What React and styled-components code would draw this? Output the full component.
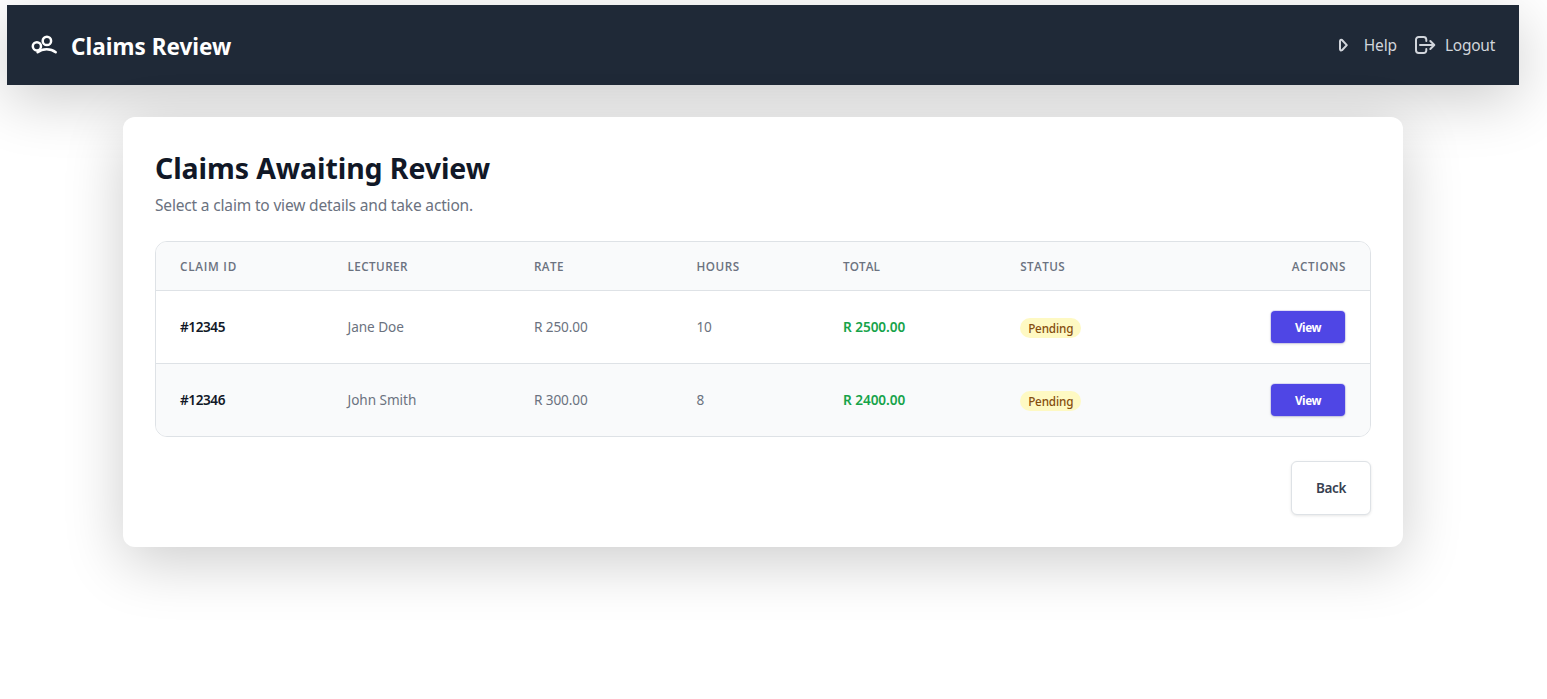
import React from 'react';
import styled, { createGlobalStyle } from 'styled-components';

const GlobalStyle = createGlobalStyle`
  *, *::before, *::after { box-sizing: border-box; }
  body {
    margin: 0;
    background: #fff;
    font-family: 'Noto Sans', 'Open Sans', sans-serif;
    font-size: 16px;
    overflow: hidden;
  }
`;

const Page = styled.div`
  height: 699px;
  padding: 5px 28px 0 7px;
  overflow: hidden;
`;

const Header = styled.header`
  height: 80px;
  padding: 0 24px;
  display: flex;
  align-items: center;
  justify-content: space-between;
  background: #1f2937;
  box-shadow: 0 15px 60px rgba(0, 0, 0, 0.2);
`;

const Brand = styled.div`
  display: flex;
  align-items: center;
  gap: 13px;
  color: #fff;
`;

const Label = styled.span`
  white-space: nowrap;
  font-size: ${(p) => p.$size}px;
  font-weight: ${(p) => p.$weight || 400};
  letter-spacing: ${(p) => p.$track || 0}px;
  line-height: 24px;
  padding-top: ${(p) => p.$drop || 0}px;
`;

const Nav = styled.nav`
  display: flex;
  align-items: center;
  gap: 17px;
  color: #d1d5db;
`;

const NavItem = styled.a`
  display: flex;
  align-items: center;
  gap: ${(p) => p.$gap}px;
`;

const Card = styled.main`
  position: relative;
  width: 1280px;
  height: 430px;
  margin: 32px auto 0;
  padding: 32px;
  border-radius: 12px;
  background: #fff;
  box-shadow: 0 15px 60px rgba(0, 0, 0, 0.2);
`;

const Title = styled.h1`
  margin: 0;
  font-size: 28.5px;
  line-height: 38px;
  font-weight: 700;
  letter-spacing: -0.1px;
  color: #111827;
`;

const Subtitle = styled.p`
  margin: 6px 0 24px;
  font-size: 15.5px;
  line-height: 24px;
  letter-spacing: -0.17px;
  color: #6b7280;
`;

const Table = styled.div`
  border: 1px solid #dee2e6;
  border-radius: 12px;
  overflow: hidden;
`;

const Row = styled.div`
  display: grid;
  grid-template-columns: 167.5px 186.5px 162.5px 146.5px 177.2px 1fr auto;
  align-items: center;
  height: ${(p) => (p.$head ? 49 : p.$last ? 72 : 73)}px;
  padding: ${(p) => (p.$head ? '0 24px 1px' : '0 24px')};
  background: ${(p) => (p.$shade ? '#f9fafb' : '#fff')};
  border-bottom: ${(p) => (p.$last ? 0 : '1px solid #dee2e6')};
`;

const HeadCell = styled.span`
  font-family: 'Open Sans', sans-serif;
  font-size: 11.7px;
  line-height: 16px;
  font-weight: 600;
  letter-spacing: ${(p) => p.$track}px;
  color: #6b7280;
`;

const cellColor = { id: '#111827', plain: '#6b7280', total: '#16a34a' };

const Cell = styled.span`
  font-size: 13.6px;
  line-height: 20px;
  letter-spacing: ${(p) => p.$track}px;
  color: ${(p) => cellColor[p.$kind || 'plain']};
  font-weight: ${(p) => (p.$kind ? 600 : 400)};
`;

const Badge = styled.span`
  justify-self: start;
  display: flex;
  align-items: center;
  justify-content: center;
  width: 61px;
  height: 20px;
  margin-top: 2px;
  border-radius: 10px;
  background: #fef9c3;
  color: #854d0e;
  font-size: 11.7px;
  line-height: 16px;
  font-weight: 500;
  letter-spacing: -0.15px;
`;

const ViewButton = styled.button`
  width: 74px;
  height: 32px;
  padding: 0;
  border: 0;
  margin-right: 1px;
  border-radius: 4px;
  background: #4f46e5;
  color: #fff;
  font: 700 11.7px 'Noto Sans', sans-serif;
  letter-spacing: -0.45px;
  box-shadow: 0 0 0 1px rgba(79, 70, 229, 0.15), 0 1px 3px rgba(0, 0, 0, 0.16);
`;

const Footer = styled.div`
  display: flex;
  justify-content: flex-end;
  margin-top: 24px;
`;

const BackButton = styled.button`
  width: 80px;
  height: 54px;
  padding: 0;
  border: 1px solid #dee2e6;
  border-radius: 6px;
  background: #fff;
  color: #374151;
  font: 600 13.5px 'Noto Sans', sans-serif;
  letter-spacing: -0.35px;
  box-shadow: 0 1px 3px rgba(0, 0, 0, 0.1);
`;

const PeopleIcon = () => (
  <svg width="27" height="24" viewBox="0 0 27 24" fill="none" stroke="#fff" strokeWidth="2.5" strokeLinecap="round" strokeLinejoin="round">
    <circle cx="15.9" cy="7.9" r="4.2" />
    <circle cx="5.9" cy="13.3" r="4.1" />
    <path d="M6.6 19.2C11.5 15.4 19.5 15.2 24.7 19.3" />
  </svg>
);

const HelpIcon = () => (
  <svg width="10" height="14" viewBox="0 0 10 14" fill="none" stroke="currentColor" strokeWidth="2" strokeLinecap="round" strokeLinejoin="round">
    <path d="M1 3.2v7.8q.3 2 2 1.2L7.8 7.1 3 2Q1.3 1.2 1 3.2Z" />
  </svg>
);

const LogoutIcon = () => (
  <svg width="22" height="20" viewBox="0 0 22 20" fill="none" stroke="currentColor" strokeWidth="2" strokeLinecap="round" strokeLinejoin="round">
    <path d="M12.3 6V4.5A2.7 2.7 0 0 0 9.6 2H4.7A2.7 2.7 0 0 0 2 4.7v10.6A2.7 2.7 0 0 0 4.7 18h4.9a2.7 2.7 0 0 0 2.7-2.5V14M6 10h14M16.3 6l4 4-4 4" />
  </svg>
);

const columns = [
  ['CLAIM ID', 0.75],
  ['LECTURER', 0.42],
  ['RATE', 0.4],
  ['HOURS', 0.5],
  ['TOTAL', 0.1],
  ['STATUS', 0.4],
  ['ACTIONS', 0.6],
];

const claims = [
  { id: '#12345', lecturer: 'Jane Doe', rate: 'R 250.00', hours: '10', total: 'R 2500.00' },
  { id: '#12346', lecturer: 'John Smith', rate: 'R 300.00', hours: '8', total: 'R 2400.00' },
];

export default function App() {
  return (
    <>
      <GlobalStyle />
      <Page>
        <Header>
          <Brand>
            <PeopleIcon />
            <Label $size={22.5} $weight={700} $track={0.03} $drop={3}>Claims Review</Label>
          </Brand>
          <Nav>
            <NavItem $gap={15}>
              <HelpIcon />
              <Label $size={15.5} $track={-0.15}>Help</Label>
            </NavItem>
            <NavItem $gap={9}>
              <LogoutIcon />
              <Label $size={15.5} $track={-0.25}>Logout</Label>
            </NavItem>
          </Nav>
        </Header>
        <Card>
          <Title>Claims Awaiting Review</Title>
          <Subtitle>Select a claim to view details and take action.</Subtitle>
          <Table>
            <Row $head $shade>
              {columns.map(([name, track]) => (
                <HeadCell key={name} $track={track}>{name}</HeadCell>
              ))}
            </Row>
            {claims.map((c, i) => (
              <Row key={c.id} $shade={i % 2 === 1} $last={i === claims.length - 1}>
                <Cell $kind="id" $track={-0.45}>{c.id}</Cell>
                <Cell $track={-0.05}>{c.lecturer}</Cell>
                <Cell $track={-0.12}>{c.rate}</Cell>
                <Cell $track={-0.2}>{c.hours}</Cell>
                <Cell $kind="total" $track={-0.05}>{c.total}</Cell>
                <Badge>Pending</Badge>
                <ViewButton>View</ViewButton>
              </Row>
            ))}
          </Table>
          <Footer>
            <BackButton>Back</BackButton>
          </Footer>
        </Card>
      </Page>
    </>
  );
}
